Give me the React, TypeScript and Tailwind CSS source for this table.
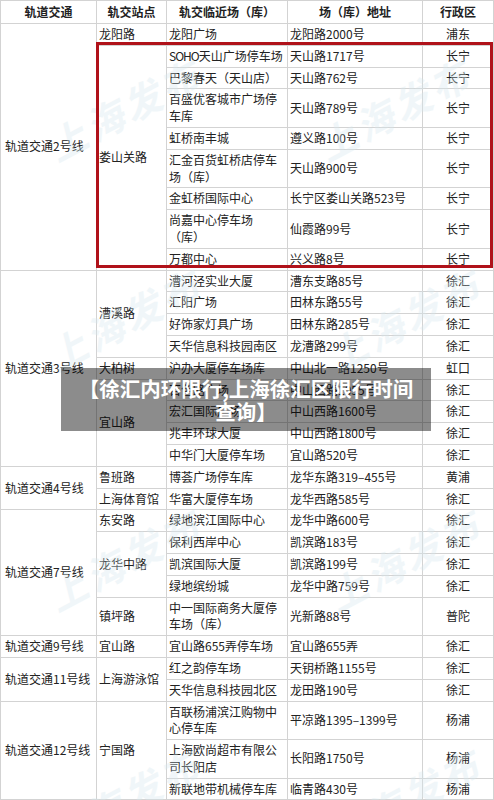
type Row = {
  line?: [string, number];
  station?: [string, number];
  place: React.ReactNode;
  addr: string;
  district: string;
};

const rows: Row[] = [
  { line: ["轨道交通2号线", 9], station: ["龙阳路", 1], place: "龙阳广场", addr: "龙阳路2000号", district: "浦东" },
  {
    station: ["娄山关路", 8],
    place: (
      <span className="whitespace-nowrap">
        <span className="tracking-[-1px]">SOHO</span>天山广场停车场
      </span>
    ),
    addr: "天山路1717号",
    district: "长宁",
  },
  { place: "巴黎春天（天山店）", addr: "天山路762号", district: "长宁" },
  { place: "百盛优客城市广场停车库", addr: "天山路789号", district: "长宁" },
  { place: "虹桥南丰城", addr: "遵义路100号", district: "长宁" },
  { place: "汇金百货虹桥店停车场（库）", addr: "天山路900号", district: "长宁" },
  { place: "金虹桥国际中心", addr: "长宁区娄山关路523号", district: "长宁" },
  { place: "尚嘉中心停车场（库）", addr: "仙霞路99号", district: "长宁" },
  { place: "万都中心", addr: "兴义路8号", district: "长宁" },
  { line: ["轨道交通3号线", 9], station: ["漕溪路", 4], place: "漕河泾实业大厦", addr: "漕东支路85号", district: "徐汇" },
  { place: "汇阳广场", addr: "田林东路55号", district: "徐汇" },
  { place: "好饰家灯具广场", addr: "田林东路285号", district: "徐汇" },
  { place: "天华信息科技园南区", addr: "龙漕路299号", district: "徐汇" },
  { station: ["大柏树", 1], place: "沪办大厦停车场库", addr: "中山北一路1250号", district: "虹口" },
  { station: ["宜山路", 4], place: "百色路广场", addr: "中山西路1055号", district: "徐汇" },
  { place: "宏汇国际广场", addr: "中山西路1600号", district: "徐汇" },
  { place: "兆丰环球大厦", addr: "中山西路1800号", district: "徐汇" },
  { place: "中华门大厦停车场", addr: "宜山路520号", district: "徐汇" },
  { line: ["轨道交通4号线", 2], station: ["鲁班路", 1], place: "博荟广场停车库", addr: "龙华东路319–455号", district: "黄浦" },
  { station: ["上海体育馆", 1], place: "华富大厦停车场", addr: "龙华西路585号", district: "徐汇" },
  { line: ["轨道交通7号线", 5], station: ["东安路", 1], place: "绿地滨江国际中心", addr: "龙华中路600号", district: "徐汇" },
  { station: ["龙华中路", 3], place: "保利西岸中心", addr: "凯滨路183号", district: "徐汇" },
  { place: "凯滨国际大厦", addr: "凯滨路199号", district: "徐汇" },
  { place: "绿地缤纷城", addr: "龙华中路759号", district: "徐汇" },
  { station: ["镇坪路", 1], place: "中一国际商务大厦停车场（库）", addr: "光新路88号", district: "普陀" },
  { line: ["轨道交通9号线", 1], station: ["宜山路", 1], place: "宜山路655弄停车场", addr: "宜山路655弄", district: "徐汇" },
  { line: ["轨道交通11号线", 2], station: ["上海游泳馆", 2], place: "红之韵停车场", addr: "天钥桥路1155号", district: "徐汇" },
  { place: "天华信息科技园北区", addr: "龙田路190号", district: "徐汇" },
  { line: ["轨道交通12号线", 3], station: ["宁国路", 3], place: "百联杨浦滨江购物中心停车库", addr: "平凉路1395–1399号", district: "杨浦" },
  { place: "上海欧尚超市有限公司长阳店", addr: "长阳路1750号", district: "杨浦" },
  { place: "新联地带机械停车库", addr: "临青路430号", district: "杨浦" },
];

const cell = "border border-[#d3d3d3] px-[2px] py-[2px] leading-[16.8px] align-middle";

function Watermark({ className }: { className: string }) {
  return (
    <div
      className={`pointer-events-none absolute -rotate-[28deg] text-[38px] font-bold italic tracking-[4px] text-[#d6e8ee] opacity-35 ${className}`}
    >
      上海发布
    </div>
  );
}

export default function App() {
  return (
    <div
      className="relative h-[800px] w-[494px] overflow-hidden bg-white text-[12px] text-[#222] [text-spacing-trim:space-all]"
      style={{ fontFamily: '"Noto Sans CJK SC", "Noto Sans", sans-serif' }}
    >
      <table className="w-[493px] table-fixed border-collapse">
        <colgroup>
          <col className="w-[96px]" />
          <col className="w-[70px]" />
          <col className="w-[121px]" />
          <col className="w-[135px]" />
          <col className="w-[71px]" />
        </colgroup>
        <thead>
          <tr className="h-[23px]">
            {["轨道交通", "轨交站点", "轨交临近场（库）", "场（库）地址", "行政区"].map((h) => (
              <th key={h} className={`${cell} text-center font-bold`}>
                {h}
              </th>
            ))}
          </tr>
        </thead>
        <tbody>
          {rows.map((r, i) => (
            <tr key={i}>
              {r.line && (
                <td rowSpan={r.line[1]} className={`${cell} pl-[4px]`}>
                  {r.line[0]}
                </td>
              )}
              {r.station && (
                <td rowSpan={r.station[1]} className={cell}>
                  {r.station[0]}
                </td>
              )}
              <td className={cell}>{r.place}</td>
              <td className={cell}>{r.addr}</td>
              <td className={`${cell} text-center`}>{r.district}</td>
            </tr>
          ))}
        </tbody>
      </table>

      <Watermark className="left-[40px] top-[80px]" />
      <Watermark className="left-[310px] top-[80px]" />
      <Watermark className="left-[40px] top-[290px]" />
      <Watermark className="left-[320px] top-[290px]" />
      <Watermark className="left-[40px] top-[530px]" />
      <Watermark className="left-[320px] top-[530px]" />
      <Watermark className="left-[40px] top-[770px]" />
      <Watermark className="left-[320px] top-[770px]" />

      <div className="pointer-events-none absolute left-[96px] top-[42px] h-[226px] w-[397px] border-[3px] border-[#b0121a]" />

      <div className="absolute left-[61px] top-[368px] flex h-[63px] w-[370px] flex-col items-center justify-center bg-black/45 text-[20.5px] font-bold leading-[23px] text-white">
        <span>【徐汇内环限行,上海徐汇区限行时间</span>
        <span>查询】</span>
      </div>
    </div>
  );
}
